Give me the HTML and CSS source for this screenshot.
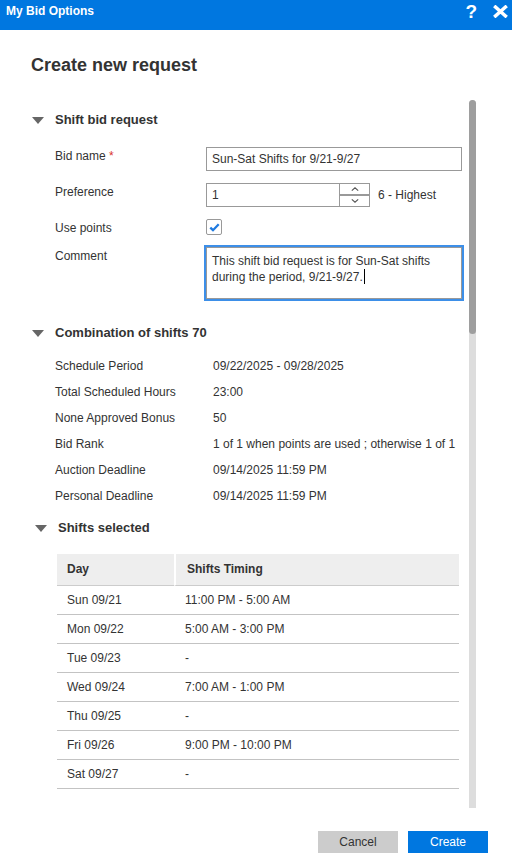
FILE: index.html
```html
<!DOCTYPE html>
<html lang="en">
<head>
  <meta charset="UTF-8">
  <meta name="viewport" content="width=device-width, initial-scale=1.0">
  <title>My Bid Options</title>
  <link rel="stylesheet" href="styles.css">
</head>
<body>
  <div class="titlebar">
    <span class="titlebar-name">My Bid Options</span>
    <div class="titlebar-tools">
      <span class="help">?</span>
      <svg class="close" width="15" height="13" viewBox="0 0 15 13">
        <path d="M2.5 2 L12.5 11 M12.5 2 L2.5 11" stroke="#fff" stroke-width="3.4" stroke-linecap="square" fill="none"/>
      </svg>
    </div>
  </div>

  <h1 class="dialog-title">Create new request</h1>

  <div class="dialog-body">
    <div class="content">

      <section class="group">
        <div class="group-head"><span class="caret"></span>Shift bid request</div>
        <div class="form">
          <div class="form-row">
            <label class="form-label">Bid name <span class="req">*</span></label>
            <input class="field" type="text" value="Sun-Sat Shifts for 9/21-9/27">
          </div>
          <div class="form-row">
            <label class="form-label">Preference</label>
            <div class="spin">
              <div class="spin-box">
                <input class="spin-input" type="text" value="1">
                <div class="spin-btns">
                  <span class="spin-up">
                    <svg width="8" height="4" viewBox="0 0 8 4"><path d="M0.8 3.6 L4 0.8 L7.2 3.6" stroke="#555" stroke-width="1.1" fill="none"/></svg>
                  </span>
                  <span class="spin-down">
                    <svg width="8" height="4" viewBox="0 0 8 4"><path d="M0.8 0.4 L4 3.2 L7.2 0.4" stroke="#555" stroke-width="1.1" fill="none"/></svg>
                  </span>
                </div>
              </div>
              <span class="spin-hint">6 - Highest</span>
            </div>
          </div>
          <div class="form-row">
            <label class="form-label">Use points</label>
            <span class="check">
              <svg width="11" height="9" viewBox="0 0 11 9"><path d="M1.3 4.6 L4 7.2 L9.7 1.3" stroke="#1f7ae0" stroke-width="2.3" fill="none"/></svg>
            </span>
          </div>
          <div class="form-row">
            <label class="form-label">Comment</label>
            <div class="comment">This shift bid request is for Sun-Sat shifts<br>during the period, 9/21-9/27.<span class="cursor"></span></div>
          </div>
        </div>
      </section>

      <section class="group group-combo">
        <div class="group-head"><span class="caret"></span>Combination of shifts 70</div>
        <div class="details">
          <span>Schedule Period</span><span>09/22/2025 - 09/28/2025</span>
          <span>Total Scheduled Hours</span><span>23:00</span>
          <span>None Approved Bonus</span><span>50</span>
          <span>Bid Rank</span><span>1 of 1 when points are used ; otherwise 1 of 1</span>
          <span>Auction Deadline</span><span>09/14/2025 11:59 PM</span>
          <span>Personal Deadline</span><span>09/14/2025 11:59 PM</span>
        </div>
      </section>

      <section class="group group-shifts">
        <div class="group-head"><span class="caret"></span>Shifts selected</div>
        <table class="shifts">
          <thead>
            <tr><th>Day</th><th>Shifts Timing</th></tr>
          </thead>
          <tbody>
            <tr><td>Sun 09/21</td><td>11:00 PM - 5:00 AM</td></tr>
            <tr><td>Mon 09/22</td><td>5:00 AM - 3:00 PM</td></tr>
            <tr><td>Tue 09/23</td><td>-</td></tr>
            <tr><td>Wed 09/24</td><td>7:00 AM - 1:00 PM</td></tr>
            <tr><td>Thu 09/25</td><td>-</td></tr>
            <tr><td>Fri 09/26</td><td>9:00 PM - 10:00 PM</td></tr>
            <tr><td>Sat 09/27</td><td>-</td></tr>
          </tbody>
        </table>
      </section>

    </div>
    <div class="scrollbar"><div class="thumb"></div></div>
  </div>

  <div class="footer">
    <button class="btn btn-cancel">Cancel</button>
    <button class="btn btn-create">Create</button>
  </div>
</body>
</html>
```

FILE: styles.css
```css
body {
  margin: 0;
  width: 512px;
  height: 861px;
  overflow: hidden;
  font-family: "Liberation Sans", Arial, sans-serif;
  font-size: 12px;
  color: #333;
  background: #fff;
}

.titlebar {
  height: 30px;
  box-sizing: border-box;
  padding: 3px 4px 0 6px;
  background: #0077e0;
  color: #fff;
  display: flex;
  justify-content: space-between;
  align-items: flex-start;
}

.titlebar-name {
  font-weight: bold;
  line-height: 16px;
}

.titlebar-tools {
  display: flex;
  align-items: flex-start;
  gap: 16px;
  margin-top: -2px;
}

.help {
  font-size: 19px;
  font-weight: bold;
  line-height: 22px;
}

.close {
  margin-top: 4px;
}

.dialog-title {
  margin: 23px 0 23px 31px;
  font-size: 18px;
  line-height: 24px;
  font-weight: bold;
  color: #333;
}

.dialog-body {
  display: flex;
  height: 708px;
}

.content {
  flex: 1;
  min-width: 0;
  padding: 12px 7px 0 32px;
  overflow: hidden;
}

.scrollbar {
  width: 7px;
  margin-right: 36px;
  background: #ddd;
  border-radius: 4px 4px 0 0;
}

.thumb {
  height: 234px;
  background: #9e9e9e;
  border-radius: 4px;
}

.group-head {
  display: flex;
  align-items: center;
  gap: 11px;
  font-size: 13px;
  line-height: 16px;
  font-weight: bold;
  color: #333;
}

.caret {
  width: 0;
  height: 0;
  border-left: 6px solid transparent;
  border-right: 6px solid transparent;
  border-top: 7px solid #666;
}

/* form */
.form {
  margin-top: 19px;
  padding-left: 23px;
  display: flex;
  flex-direction: column;
  gap: 12px;
}

.form-row {
  display: flex;
  align-items: flex-start;
}

.form-label {
  width: 151px;
  flex-shrink: 0;
  padding-top: 2px;
  line-height: 14px;
}

.req {
  color: #d9322b;
}

.field {
  width: 256px;
  height: 24px;
  box-sizing: border-box;
  margin: 0;
  border: 1px solid #999;
  border-radius: 0;
  padding: 0 5px;
  font: inherit;
  color: #333;
}

.spin {
  display: flex;
  align-items: center;
}

.spin-box {
  display: flex;
  width: 164px;
  height: 24px;
  box-sizing: border-box;
  border: 1px solid #999;
}

.spin-input {
  flex: 1;
  min-width: 0;
  border: none;
  padding: 0 5px;
  margin: 0;
  font: inherit;
  color: #333;
}

.spin-btns {
  width: 29px;
  border-left: 1px solid #999;
  display: flex;
  flex-direction: column;
}

.spin-up,
.spin-down {
  flex: 1;
  display: flex;
  align-items: center;
  justify-content: center;
}

.spin-up {
  border-bottom: 2px solid #999;
}

.spin-hint {
  margin-left: 8px;
}

.check {
  width: 16px;
  height: 16px;
  box-sizing: border-box;
  border: 1px solid #999;
  border-radius: 2px;
  display: flex;
  align-items: center;
  justify-content: center;
}

.comment {
  width: 256px;
  height: 52px;
  box-sizing: border-box;
  border: 1px solid #999;
  outline: 2px solid #3d8fe8;
  padding: 5px 5px 3px;
  line-height: 16px;
  color: #333;
}

.cursor {
  display: inline-block;
  width: 1px;
  height: 15px;
  margin-left: 1px;
  background: #000;
  vertical-align: -3px;
}

/* details */
.group-combo {
  margin-top: 26px;
}

.details {
  margin-top: 18px;
  padding-left: 23px;
  display: grid;
  grid-template-columns: 158px 1fr;
  row-gap: 12px;
  line-height: 14px;
}

/* shifts table */
.group-shifts {
  margin-top: 17px;
  padding-left: 3px;
}

.shifts {
  margin: 18px 0 0 22px;
  width: 402px;
  border-collapse: separate;
  border-spacing: 0;
}

.shifts th {
  padding: 8px 10px 9px;
  line-height: 14px;
  text-align: left;
  font-weight: bold;
  background: #eee;
  border-bottom: 1px solid #ccc;
}

.shifts th:first-child {
  width: 97px;
}

.shifts th + th {
  border-left: 2px solid #fff;
  padding-left: 11px;
}

.shifts td {
  padding: 7px 10px;
  line-height: 14px;
  border-bottom: 1px solid #c3c3c3;
}

.shifts td + td {
  padding-left: 11px;
}

/* footer */
.footer {
  display: flex;
  justify-content: flex-end;
  gap: 10px;
  padding: 23px 24px 0 0;
}

.btn {
  width: 80px;
  height: 22px;
  border: none;
  border-radius: 0;
  padding: 0;
  font: inherit;
  cursor: pointer;
}

.btn-cancel {
  background: #ccc;
  color: #333;
}

.btn-create {
  background: #0077e0;
  color: #fff;
}
```
